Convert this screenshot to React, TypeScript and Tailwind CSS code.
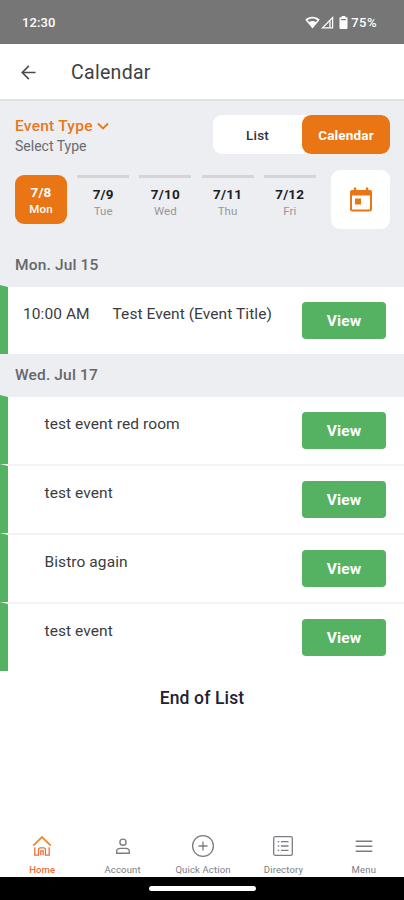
import type { ReactNode } from 'react';
import clsx from 'clsx';

type CalendarEvent = { id: number; time?: string; title: string };

const days = [
	{ date: '7/8', label: 'Mon', active: true },
	{ date: '7/9', label: 'Tue', active: false },
	{ date: '7/10', label: 'Wed', active: false },
	{ date: '7/11', label: 'Thu', active: false },
	{ date: '7/12', label: 'Fri', active: false },
];

const firstGroup: CalendarEvent[] = [{ id: 1, time: '10:00 AM', title: 'Test Event (Event Title)' }];

const secondGroup: CalendarEvent[] = [
	{ id: 2, title: 'test event red room' },
	{ id: 3, title: 'test event' },
	{ id: 4, title: 'Bistro again' },
	{ id: 5, title: 'test event' },
];

const tabs: { label: string; active?: boolean; icon: ReactNode }[] = [
	{
		label: 'Home',
		active: true,
		icon: (
			<svg className="h-6 w-6" viewBox="0 0 24 24" fill="none" stroke="currentColor" strokeWidth="1.3">
				<path d="M3.2 11.6 12 3l8.8 8.6" stroke="#ef8a2e" strokeWidth="1.8" />
				<path d="M4.8 13.2v8h3.7v-5.4c0-1.3.8-2 2-2h3c1.2 0 2 .7 2 2v5.4h3.7v-8M10.8 21.2v-4.4h2.4v4.4" />
			</svg>
		),
	},
	{
		label: 'Account',
		icon: (
			<svg className="h-6 w-6" viewBox="0 0 24 24" fill="none" stroke="currentColor" strokeWidth="1.4">
				<circle cx="12" cy="8.2" r="3.1" />
				<path d="M5.7 19.3v-1.9c0-2 1.7-3 3.7-3h5.2c2 0 3.7 1 3.7 3v1.9z" />
			</svg>
		),
	},
	{
		label: 'Quick Action',
		icon: (
			<svg className="h-6 w-6" viewBox="0 0 24 24" fill="none" stroke="currentColor" strokeWidth="1.3">
				<circle cx="12" cy="12" r="10.4" />
				<path d="M12 7.5v9M7.5 12h9" />
			</svg>
		),
	},
	{
		label: 'Directory',
		icon: (
			<svg className="h-6 w-6" viewBox="0 0 24 24" fill="none" stroke="currentColor" strokeWidth="1.3">
				<rect x="2.7" y="2.7" width="18.6" height="18.6" rx="1.6" />
				<path d="M10 7.7h7.5M10 12h7.5M10 16.3h7.5M6.7 7.7h1.5M6.7 12h1.5M6.7 16.3h1.5" />
			</svg>
		),
	},
	{
		label: 'Menu',
		icon: (
			<svg className="h-6 w-6" viewBox="0 0 24 24" fill="none" stroke="currentColor" strokeWidth="1.4">
				<path d="M3.7 7.2h16.6M3.7 12.2h16.6M3.7 17.2h16.6" />
			</svg>
		),
	},
];

function StatusBar() {
	return (
		<div className="flex h-11 items-center justify-between bg-[#767676] pt-px pr-[27px] pl-[22px] text-[13px] font-medium text-white">
			<span className="pt-px tracking-[0.1px]">12:30</span>
			<div className="flex items-center">
				<svg className="h-[13px] w-[15px]" viewBox="0 0 15 13">
					<path d="M.3 3.7C4.2-.1 10.8-.1 14.7 3.7L7.5 12.5z" fill="#fff" />
					<path d="M2.6 4.2c3-2.2 6.8-2.2 9.8 0l-1.5 1.9c-2-1.4-4.8-1.4-6.8 0z" fill="#767676" />
				</svg>
				<svg className="ml-px h-[13px] w-[13px]" viewBox="0 0 13 13" fill="none" stroke="#fff" strokeWidth="1.3">
					<path d="M11.6 1.6v10.2H1.5z" />
					<path d="M9 4.5v7" />
				</svg>
				<svg className="ml-[5px] h-[13px] w-[9px]" viewBox="0 0 9 13" fill="#fff">
					<path d="M2.7 0h3.6v1.3h1.4c.5 0 .8.3.8.8v10c0 .5-.3.9-.8.9H1.3c-.5 0-.8-.4-.8-.9v-10c0-.5.3-.8.8-.8h1.4z" />
					<path d="M2 3h5v1.2H2z" fill="#767676" />
				</svg>
				<span className="ml-[3px] pt-px tracking-[0.5px]">75%</span>
			</div>
		</div>
	);
}

function DateHeading({ children, className }: { children: ReactNode; className: string }) {
	return (
		<h2
			className={clsx(
				'flex items-center bg-[#eceef2] pl-[15px] text-[15.5px] font-medium tracking-[0.15px] text-[#65676b]',
				className
			)}
		>
			{children}
		</h2>
	);
}

function EventRow({ event, first }: { event: CalendarEvent; first: boolean }) {
	return (
		<li
			className={clsx(
				'flex h-[69px] border-t-2 border-l-8 border-l-[#54b262]',
				first ? 'border-t-[#eceef2]' : 'border-t-[#f3f3f4]'
			)}
		>
			<div className="flex flex-1 items-start pt-4 text-[15.5px] leading-[22px] tracking-[0.08px] text-[#3c3c3e]">
				{event.time && <span className="w-[88px] pl-[15px]">{event.time}</span>}
				<span className={event.time ? 'pl-[16.5px]' : 'pl-[36.5px]'}>{event.title}</span>
			</div>
			<button className="mt-[15px] mr-[18px] h-[37px] w-[84px] shrink-0 rounded-[4px] bg-[#54b262] pt-0.5 text-[15.5px] font-bold tracking-[0.1px] text-white">
				View
			</button>
		</li>
	);
}

export default function App() {
	return (
		<div className="flex h-[900px] w-[404px] flex-col overflow-hidden bg-white font-['Roboto',sans-serif]">
			<StatusBar />
			<header className="flex h-[57px] items-center border-b-2 border-[#e0e2e5] pt-0.5 pl-[21px]">
				<svg className="h-[15px] w-[15px]" viewBox="0 0 16 16" fill="none" stroke="#4a4a4c" strokeWidth="1.7">
					<path d="M15.5 8H1.8M8.4.9 1.3 8l7.1 7.1" />
				</svg>
				<h1 className="ml-[35px] text-[19.5px] tracking-[0.3px] text-[#3f4042]">Calendar</h1>
			</header>

			<section className="h-[142px] bg-[#eceef2] pt-3.5 pr-3.5 pl-[15px]">
				<div className="flex h-[39px] justify-between">
					<div className="pt-[1px]">
						<button className="flex items-center gap-1 text-[15.5px] leading-5 font-medium tracking-[0.25px] text-[#e9771c]">
							Event Type
							<svg className="h-2 w-3" viewBox="0 0 12 8" fill="none" stroke="currentColor" strokeWidth="1.9">
								<path d="m1 1.5 5 5 5-5" />
							</svg>
						</button>
						<p className="text-sm leading-[21px] text-[#6a6b6e]">Select Type</p>
					</div>
					<div className="flex w-[177px] rounded-[9px] bg-white text-[13.5px] font-medium tracking-[0.15px]">
						<button className="flex-1 pt-px text-[#333335]">List</button>
						<button className="w-[88px] rounded-[9px] bg-[#e97515] pt-px font-bold text-white">Calendar</button>
					</div>
				</div>
				<div className="mt-4 flex items-start justify-between">
					<div className="flex gap-[10.2px] pt-[5px]">
						{days.map((day) => (
							<button
								key={day.date}
								className={clsx(
									'flex h-[49px] w-[52px] flex-col items-center',
									day.active ? 'rounded-[9px] bg-[#e97515] pt-2 text-white' : 'border-t-[3px] border-[#d3d5d8] pt-[7px]'
								)}
							>
								<span
									className={clsx('text-[13.5px] leading-[18px] font-bold tracking-[0.2px]', !day.active && 'text-[#1d1d1f]')}
								>
									{day.date}
								</span>
								<span
									className={clsx('text-[11.5px] tracking-[0.1px]', day.active ? 'leading-[17px] font-medium' : 'leading-4 text-[#96979b]')}
								>
									{day.label}
								</span>
							</button>
						))}
					</div>
					<button className="flex h-[59px] w-[59px] items-center justify-center rounded-[9px] bg-white">
						<svg className="h-[26px] w-[24px]" viewBox="0 0 24 26" fill="none" stroke="#e97515">
							<rect x="2" y="4" width="20" height="19.5" rx="1.5" strokeWidth="2" />
							<path d="M1.5 6h21" strokeWidth="5" />
							<path d="M6 .5v4M18 .5v4" strokeWidth="2.4" />
							<path d="M6 11.5h6v6H6z" fill="#e97515" stroke="none" />
						</svg>
					</button>
				</div>
			</section>

			<main className="flex-1">
				<DateHeading className="h-[42px] pt-[3px]">Mon. Jul 15</DateHeading>
				<ul>
					{firstGroup.map((event, i) => (
						<EventRow key={event.id} event={event} first={i === 0} />
					))}
				</ul>
				<DateHeading className="h-[41px] pt-0.5">Wed. Jul 17</DateHeading>
				<ul>
					{secondGroup.map((event, i) => (
						<EventRow key={event.id} event={event} first={i === 0} />
					))}
				</ul>
				<p className="mt-[15px] text-center text-[17.5px] leading-6 font-medium tracking-[0.15px] text-[#202132]">End of List</p>
			</main>

			<nav className="flex h-[43px] shrink-0 pl-0.5 text-[9.5px] tracking-[0.15px] text-[#7b7d82]">
				{tabs.map((tab) => (
					<button key={tab.label} className={clsx('flex flex-1 flex-col items-center', tab.active && 'font-medium text-[#ed6f3b]')}>
						{tab.icon}
						<span className="mt-1.5 leading-3">{tab.label}</span>
					</button>
				))}
			</nav>
			<div className="flex h-[23px] shrink-0 items-center justify-center bg-black">
				<div className="h-[5px] w-[107px] rounded-full bg-white" />
			</div>
		</div>
	);
}
